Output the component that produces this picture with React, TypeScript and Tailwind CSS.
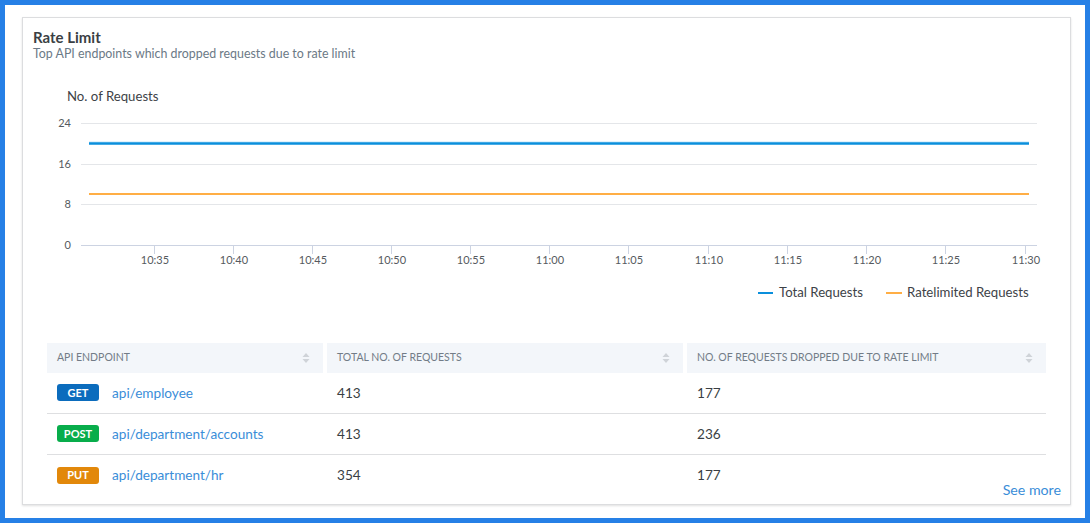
const font = "font-['Lato','Liberation_Sans',sans-serif]"

const ticks = ["10:35", "10:40", "10:45", "10:50", "10:55", "11:00", "11:05", "11:10", "11:15", "11:20", "11:25", "11:30"]
const tickX = [154, 233, 312, 391, 470, 549, 628, 708, 787, 866, 945, 1025]
const grid = [
  { label: "24", y: 123 },
  { label: "16", y: 164 },
  { label: "8", y: 204 },
]

const rows = [
  { method: "GET", color: "bg-[#0b6cbd]", path: "api/employee", total: "413", dropped: "177" },
  { method: "POST", color: "bg-[#08ad4b]", path: "api/department/accounts", total: "413", dropped: "236" },
  { method: "PUT", color: "bg-[#e2880a]", path: "api/department/hr", total: "354", dropped: "177" },
]

function SortIcon() {
  return (
    <svg width="8" height="12" viewBox="0 0 8 12" className="shrink-0">
      <path d="M4 1 L7.5 5 L0.5 5 Z" fill="#cfd3d8" />
      <path d="M4 11 L7.5 7 L0.5 7 Z" fill="#cfd3d8" />
    </svg>
  )
}

function Chart() {
  return (
    <svg width="1047" height="225" viewBox="23 80 1047 225" className="block" style={{ fontFamily: "Lato, 'Liberation Sans', sans-serif" }}>
      <text x="67" y="101" fontSize="13.2" fill="#3d4247">No. of Requests</text>
      {grid.map((g) => (
        <g key={g.label}>
          <line x1="81" x2="1037" y1={g.y + 0.5} y2={g.y + 0.5} stroke="#e4e6e9" strokeWidth="1" />
          <text x="71" y={g.y + 4} fontSize="11" fill="#555a60" textAnchor="end">{g.label}</text>
        </g>
      ))}
      <line x1="81" x2="1037" y1="245.5" y2="245.5" stroke="#ccd3e2" strokeWidth="1" />
      <text x="71" y="249" fontSize="11" fill="#555a60" textAnchor="end">0</text>
      {ticks.map((t, i) => (
        <g key={t}>
          <line x1={tickX[i] + 0.5} x2={tickX[i] + 0.5} y1="245" y2="254" stroke="#ccd3e2" strokeWidth="1" />
          <text x={tickX[i] + 1} y="264" fontSize="11" fill="#555a60" textAnchor="middle">{t}</text>
        </g>
      ))}
      <line x1="89" x2="1029" y1="142" y2="142" stroke="#c4e4f7" strokeWidth="1" />
      <line x1="89" x2="1029" y1="143.5" y2="143.5" stroke="#0a8fdc" strokeWidth="2.6" />
      <line x1="89" x2="1029" y1="194" y2="194" stroke="#ffae45" strokeWidth="2" />
      <line x1="758" x2="773" y1="293" y2="293" stroke="#0a8fdc" strokeWidth="2" />
      <text x="779" y="297" fontSize="13.2" fill="#3d4247">Total Requests</text>
      <line x1="886" x2="902" y1="293" y2="293" stroke="#ffae45" strokeWidth="2" />
      <text x="907" y="297" fontSize="13.2" fill="#3d4247">Ratelimited Requests</text>
    </svg>
  )
}

export default function App() {
  return (
    <div className={`w-[1090px] h-[523px] border-[5px] border-[#2680e6] bg-white pt-[12px] pl-[17px] ${font}`}>
      <div className="w-[1049px] h-[488px] border border-[#dcdddf] shadow-[0_1px_2px_rgba(0,0,0,0.12)] flex flex-col">
        <div className="pt-[10px] pl-[10px]">
          <h2 className="text-[15px] leading-[18px] font-bold text-[#3a3f44]">Rate Limit</h2>
          <p className="text-[12.4px] leading-[16px] text-[#6b7986]">Top API endpoints which dropped requests due to rate limit</p>
        </div>
        <div className="mt-[18px]">
          <Chart />
        </div>
        <div className="mt-[38px] ml-[24px] w-[999px]">
          <div className="flex gap-[4px] h-[30px] text-[10.5px] text-[#727c87] uppercase">
            <div className="w-[276px] bg-[#f3f6fa] flex items-center justify-between pl-[10px] pr-[13px]">
              <span>API Endpoint</span>
              <SortIcon />
            </div>
            <div className="w-[356px] bg-[#f3f6fa] flex items-center justify-between pl-[10px] pr-[13px]">
              <span>Total No. of Requests</span>
              <SortIcon />
            </div>
            <div className="w-[359px] bg-[#f3f6fa] flex items-center justify-between pl-[10px] pr-[13px]">
              <span>No. of Requests Dropped due to Rate Limit</span>
              <SortIcon />
            </div>
          </div>
          {rows.map((r, i) => (
            <div key={r.path} className={`flex gap-[4px] h-[41px] items-center text-[13.6px] ${i < rows.length - 1 ? "border-b border-[#dedfe1]" : ""}`}>
              <div className="w-[276px] flex items-center pl-[10px] gap-[13px]">
                <span className={`${r.color} w-[42px] h-[17px] rounded-[3px] flex items-center justify-center text-white text-[11px] font-bold`}>{r.method}</span>
                <span className="text-[#3a8dd8]">{r.path}</span>
              </div>
              <div className="w-[356px] pl-[10px] text-[#3a3f44]">{r.total}</div>
              <div className="w-[359px] pl-[10px] text-[#3a3f44]">{r.dropped}</div>
            </div>
          ))}
        </div>
        <div className="flex justify-end pr-[9px] -mt-[14px]">
          <span className="text-[14.2px] leading-[16px] text-[#3a8dd8]">See more</span>
        </div>
      </div>
    </div>
  )
}
